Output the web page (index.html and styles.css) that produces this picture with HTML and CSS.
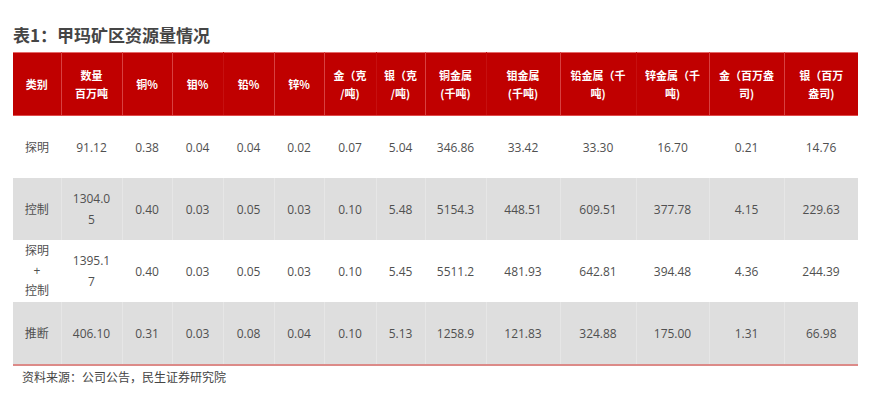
FILE: index.html
```html
<!DOCTYPE html>
<html lang="zh">
<head>
<meta charset="utf-8">
<link rel="stylesheet" href="styles.css">
</head>
<body>
<div class="page">
  <h1 class="title">表1：甲玛矿区资源量情况</h1>
  <table class="res">
    <colgroup>
      <col style="width:48px"><col style="width:61px"><col style="width:50px"><col style="width:51px"><col style="width:51px"><col style="width:50px"><col style="width:52px"><col style="width:49px"><col style="width:61px"><col style="width:74px"><col style="width:76px"><col style="width:73px"><col style="width:75px"><col style="width:74px">
    </colgroup>
    <thead>
      <tr>
        <th>类别</th>
        <th>数量<br>百万吨</th>
        <th>铜%</th>
        <th>钼%</th>
        <th class="faint">铅%</th>
        <th>锌%</th>
        <th>金（克<br>/吨)</th>
        <th class="faint">银（克<br>/吨)</th>
        <th>铜金属<br>(千吨)</th>
        <th class="faint">钼金属<br>(千吨)</th>
        <th>铅金属（千<br>吨)</th>
        <th class="faint">锌金属（千<br>吨)</th>
        <th>金（百万盎<br>司)</th>
        <th>银（百万<br>盎司)</th>
      </tr>
    </thead>
    <tbody>
      <tr>
        <td>探明</td><td>91.12</td><td>0.38</td><td>0.04</td><td>0.04</td><td>0.02</td><td>0.07</td><td>5.04</td><td>346.86</td><td>33.42</td><td>33.30</td><td>16.70</td><td>0.21</td><td>14.76</td>
      </tr>
      <tr class="alt">
        <td>控制</td><td>1304.0<br>5</td><td>0.40</td><td>0.03</td><td>0.05</td><td>0.03</td><td>0.10</td><td>5.48</td><td>5154.3</td><td>448.51</td><td>609.51</td><td>377.78</td><td>4.15</td><td>229.63</td>
      </tr>
      <tr>
        <td class="tight">探明<br>+<br>控制</td><td>1395.1<br>7</td><td>0.40</td><td>0.03</td><td>0.05</td><td>0.03</td><td>0.10</td><td>5.45</td><td>5511.2</td><td>481.93</td><td>642.81</td><td>394.48</td><td>4.36</td><td>244.39</td>
      </tr>
      <tr class="alt">
        <td>推断</td><td>406.10</td><td>0.31</td><td>0.03</td><td>0.08</td><td>0.04</td><td>0.10</td><td>5.13</td><td>1258.9</td><td>121.83</td><td>324.88</td><td>175.00</td><td>1.31</td><td>66.98</td>
      </tr>
    </tbody>
  </table>
  <p class="source">资料来源：公司公告，民生证券研究院</p>
</div>
</body>
</html>
```

FILE: styles.css
```css
html, body {
  margin: 0;
  padding: 0;
  background: #ffffff;
}

.page {
  padding: 24px 14px 0 13px;
  font-family: "Open Sans", "Noto Sans CJK SC", sans-serif;
  color: #505050;
}

.title {
  margin: 0 0 6px 0;
  font-family: "Noto Sans CJK SC", sans-serif;
  font-size: 17px;
  line-height: 22px;
  font-weight: 700;
  color: #454545;
}

.res {
  width: 845px;
  table-layout: fixed;
  border-collapse: collapse;
  border-top: 1px solid #e46a6a;
  border-bottom: 2px solid #dc8a88;
}

.res th {
  height: 62px;
  padding: 0 2px;
  background: #c00000;
  color: #ffffff;
  font-family: "Noto Sans CJK SC", sans-serif;
  font-size: 11px;
  font-weight: 700;
  line-height: 18px;
  text-align: center;
  vertical-align: middle;
  border-left: 1px solid #d84040;
  border-bottom: 1px solid #e04a4a;
}

.res th.faint {
  border-left-color: #c61010;
}

.res th:first-child {
  border-left: none;
}

.res td {
  height: 62px;
  padding: 0 2px;
  font-size: 12px;
  line-height: 21px;
  text-align: center;
  vertical-align: middle;
  color: #505050;
  word-break: break-all;
}

.res td.tight {
  line-height: 20px;
}

.res tr.alt td {
  background: #dedede;
  border-left: 1px solid #e6e6e6;
}

.res tr.alt td:first-child {
  border-left: none;
}

.source {
  margin: 2px 0 0 9px;
  font-family: "Noto Sans CJK SC", sans-serif;
  font-size: 12px;
  line-height: 18px;
  color: #454545;
}
```
